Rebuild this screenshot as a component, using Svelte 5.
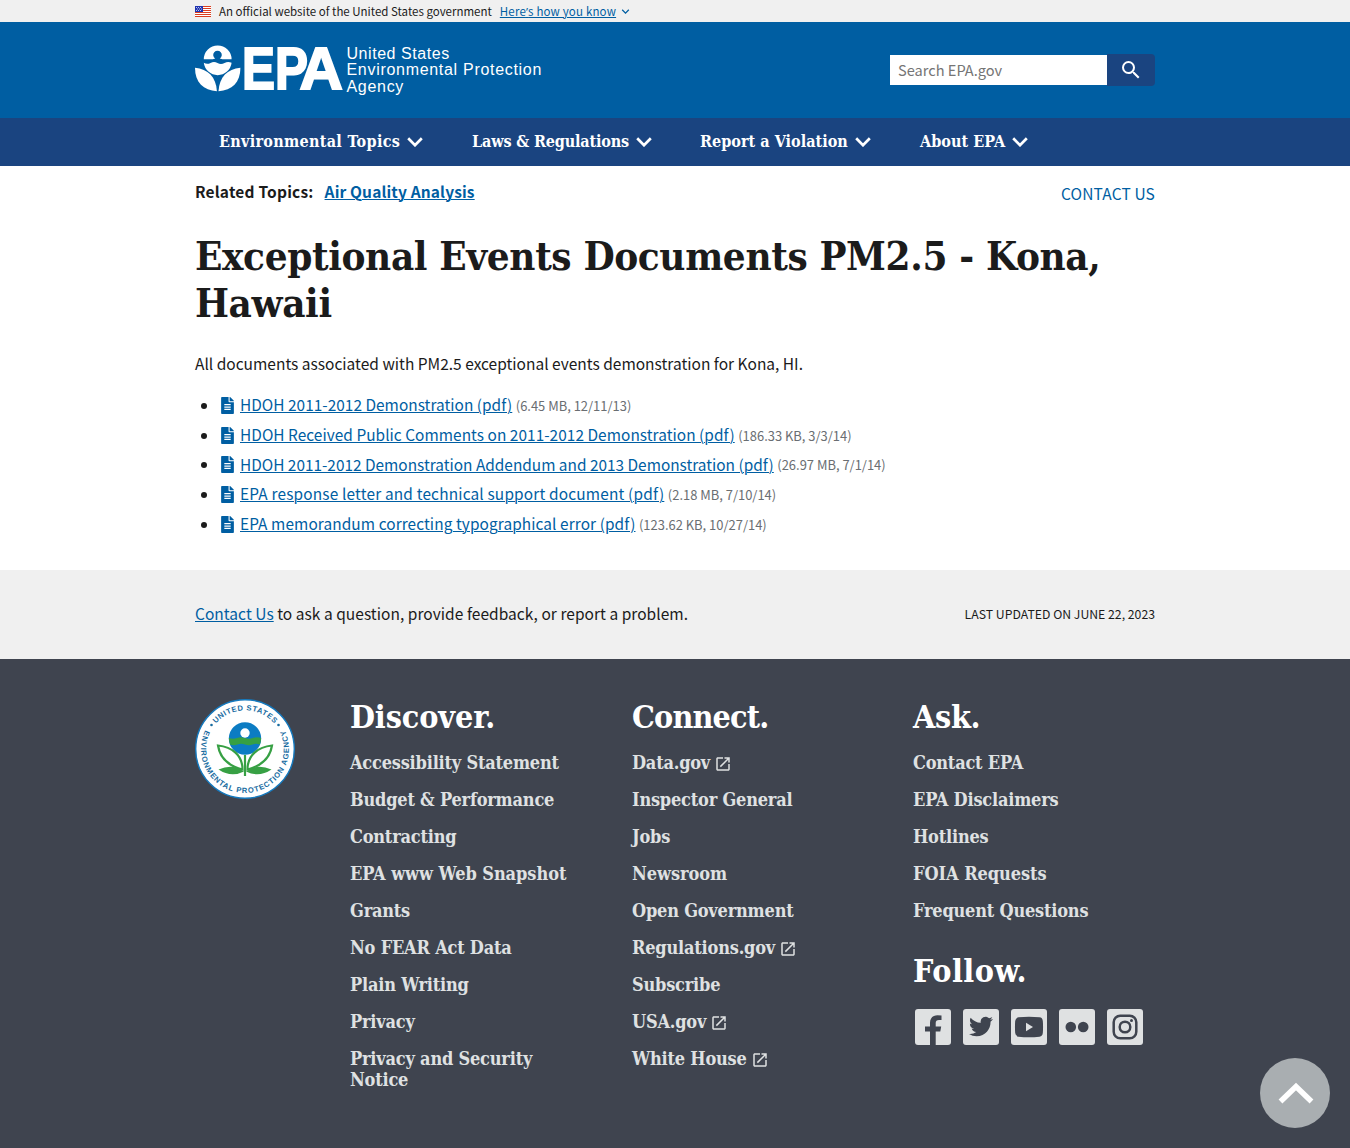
<script>
  const nav = [
    { label: 'Environmental Topics', cls: 'n1' },
    { label: 'Laws & Regulations', cls: 'n2' },
    { label: 'Report a Violation', cls: 'n3' },
    { label: 'About EPA', cls: 'n4' }
  ];
  const docs = [
    ['HDOH 2011-2012 Demonstration (pdf)', '(6.45 MB, 12/11/13)'],
    ['HDOH Received Public Comments on 2011-2012 Demonstration (pdf)', '(186.33 KB, 3/3/14)'],
    ['HDOH 2011-2012 Demonstration Addendum and 2013 Demonstration (pdf)', '(26.97 MB, 7/1/14)'],
    ['EPA response letter and technical support document (pdf)', '(2.18 MB, 7/10/14)'],
    ['EPA memorandum correcting typographical error (pdf)', '(123.62 KB, 10/27/14)']
  ];
  const discover = ['Accessibility Statement', 'Budget & Performance', 'Contracting', 'EPA www Web Snapshot', 'Grants', 'No FEAR Act Data', 'Plain Writing', 'Privacy', 'Privacy and Security Notice'];
  const connect = ['Data.gov', 'Inspector General', 'Jobs', 'Newsroom', 'Open Government', 'Regulations.gov', 'Subscribe', 'USA.gov', 'White House'];
  const external = ['Data.gov', 'Regulations.gov', 'USA.gov', 'White House'];
  const ask = ['Contact EPA', 'EPA Disclaimers', 'Hotlines', 'FOIA Requests', 'Frequent Questions'];
  const stripes = [0, 2, 4, 6, 8, 10];
</script>

{#snippet links(items)}
  <ul class="links">
    {#each items as item}
      <li>
        <a href="#top">{item}</a>{#if external.includes(item)}<svg class="launch" viewBox="0 0 24 24"><path d="M19 19H5V5h7V3H5c-1.11 0-2 .9-2 2v14c0 1.1.89 2 2 2h14c1.1 0 2-.9 2-2v-7h-2v7zM14 3v2h3.59l-9.83 9.83 1.41 1.41L19 6.41V10h2V3h-7z" /></svg>{/if}
      </li>
    {/each}
  </ul>
{/snippet}

<div class="page" id="top">
  <div class="banner">
    <div class="wrap banner-row">
      <svg class="flag" viewBox="0 0 16 11">
        <rect width="16" height="11" fill="#fff" />
        {#each stripes as y}<rect {y} width="16" height="1" fill="#db3e1f" />{/each}
        <rect width="8" height="6" fill="#1e33b1" />
        <path d="M1 1.5h6M2 3h5M1 4.5h6" stroke="#fff" stroke-width=".7" stroke-dasharray="1 1" />
      </svg>
      <span class="official">An official website of the United States government</span>
      <a class="know" href="#top">Here<span class="apos">’</span>s how you know</a>
      <svg class="tiny" viewBox="0 0 24 24"><path d="M16.59 8.59 12 13.17 7.41 8.59 6 10l6 6 6-6z" /></svg>
    </div>
  </div>

  <header>
    <div class="wrap head-row">
      <a class="logo" href="#top" aria-label="EPA home">
        <svg class="mark" viewBox="0 0 152 48">
          <path d="M8.800 14.300A13.900 13.900 0 0 1 36.600 14.300H27.400L24.800 13.600A4.300 4.300 0 1 0 20.200 13.600L17.800 14.300Z" />
          <path d="M8.800 17.800Q12 19.800 15.500 18T22.500 18T29.500 18T36.600 17.800A14 14 0 0 1 8.800 17.800Z" />
          <path d="M0 22.800C13 24 21 32 21.900 46.200C8.500 45.500 0 37.500 0 22.800Z" />
          <path d="M45.400 22.800C32.400 24 24.400 32 23.500 46.200C37 45.500 45.400 37.500 45.400 22.800Z" />
          <text y="44"><tspan x="47" textLength="66" lengthAdjust="spacingAndGlyphs">EP</tspan><tspan x="104.500">A</tspan></text>
        </svg>
        <span class="agency">
          <span class="a1">United States</span>
          <span class="a2">Environmental Protection</span>
          <span class="a3">Agency</span>
        </span>
      </a>
      <form class="search">
        <input type="text" placeholder="Search EPA.gov" />
        <button type="button" aria-label="Search">
          <svg viewBox="0 0 24 24"><path d="M15.500 14h-.79l-.28-.27A6.471 6.471 0 0 0 16 9.500 6.500 6.500 0 1 0 9.500 16c1.610 0 3.090-.59 4.230-1.570l.27.28v.79l5 4.990L20.490 19l-4.990-5zm-6 0C7.010 14 5 11.990 5 9.500S7.010 5 9.500 5 14 7.010 14 9.500 11.990 14 9.500 14z" /></svg>
        </button>
      </form>
    </div>
  </header>

  <nav>
    <div class="wrap nav-row">
      {#each nav as n}
        <a href="#top" class={n.cls}><span>{n.label}</span><svg viewBox="0 0 16 10"><path d="M1.200 1.300 8 8.200l6.800-6.900" /></svg></a>
      {/each}
    </div>
  </nav>

  <main class="wrap">
    <div class="topics">
      <div class="related"><span>Related Topics:</span><a href="#top">Air Quality Analysis</a></div>
      <a class="contact" href="#top">CONTACT US</a>
    </div>
    <h1>Exceptional Events Documents PM2.5 - Kona, Hawaii</h1>
    <p>All documents associated with PM2.5 exceptional events demonstration for Kona, HI.</p>
    <ul class="docs">
      {#each docs as [name, meta]}
        <li>
          <i></i>
          <svg viewBox="0 0 12 16"><path d="M7 0H.75A.75.75 0 0 0 0 .75v14.500c0 .41.34.75.75.75h10.500c.41 0 .75-.34.75-.75V5H7.750A.75.75 0 0 1 7 4.250zM9 12.200H3v-1.100h6zm0-2.200H3V8.900h6zm0-2.200H3V6.700h6zM12 3.800V4H8V0h.2c.2 0 .4.080.53.220l3.050 3.050c.14.14.22.330.22.530z" /></svg>
          <a href="#top">{name}</a><span class="meta">{meta}</span>
        </li>
      {/each}
    </ul>
  </main>

  <div class="feedback">
    <div class="wrap feedback-row">
      <span class="ask-line"><a href="#top">Contact Us</a> to ask a question, provide feedback, or report a problem.</span>
      <span class="updated">LAST UPDATED ON JUNE 22, 2023</span>
    </div>
  </div>

  <footer>
    <div class="wrap foot-grid">
      <svg class="seal" viewBox="0 0 100 102">
        <defs>
          <path id="arc-top" d="M11.300 51A38.700 38.700 0 0 1 88.700 51" />
          <path id="arc-bottom" d="M21.700 17.300A44 44 0 1 0 78.300 17.300" />
        </defs>
        <circle cx="50" cy="51" r="49.300" fill="#fff" stroke="#1479be" stroke-width="1.400" />
        <text class="seal-text"><textPath href="#arc-top" startOffset="50%" text-anchor="middle" textLength="66">UNITED STATES</textPath></text>
        <text class="seal-text"><textPath href="#arc-bottom" startOffset="50%" text-anchor="middle" textLength="177">ENVIRONMENTAL PROTECTION AGENCY</textPath></text>
        <circle cx="16.500" cy="27" r="1.300" fill="#176b9f" />
        <circle cx="83.500" cy="27" r="1.300" fill="#176b9f" />
        <circle cx="50" cy="40.500" r="16.200" fill="#0c7cc3" />
        <path d="M33.900 40Q38 41.500 42 40T50 40T58 40T66.100 40Q66 43.500 64.900 46.500Q61 45 57.500 46.500T50 46.500T42.500 46.500T35.100 46.500Q34 43.500 33.900 40Z" fill="#36a044" />
        <circle cx="50" cy="35" r="4.700" fill="#fff" />
        <path d="M23 47.500C37 49 47.500 57 47.500 71.500C34 68 25 61 23 47.500ZM77 47.500C63 49 52.500 57 52.500 71.500C66 68 75 61 77 47.500Z" fill="none" stroke="#37a044" stroke-width="2.200" />
        <path d="M50 57V78" stroke="#37a044" stroke-width="2.200" />
        <path d="M23.500 71.500Q38 65 49 73.500Q36 80 23.500 71.500ZM76.500 71.500Q62 65 51 73.500Q64 80 76.500 71.500Z" fill="#37a044" />
      </svg>
      <section>
        <h2 class="discover">Discover.</h2>
        {@render links(discover)}
      </section>
      <section>
        <h2 class="connect">Connect.</h2>
        {@render links(connect)}
      </section>
      <section>
        <h2>Ask.</h2>
        {@render links(ask)}
        <h2 class="follow">Follow.</h2>
        <div class="social">
          <svg viewBox="0 0 36 36"><rect width="36" height="36" rx="3" /><path class="ink" d="M15 36V22.500H10V17.500H15V14C15 9 18 6.200 22.500 6.200Q24.500 6.200 26.500 6.600V11H24C21.700 11 20.700 12.300 20.700 14V17.500H26.200L25.300 22.500H20.700V36Z" /></svg>
          <svg viewBox="0 0 36 36"><rect width="36" height="36" rx="3" /><path class="ink" transform="translate(6 5.500)" d="M23.953 4.570a10 10 0 01-2.825.775 4.958 4.958 0 002.163-2.723c-.951.555-2.005.959-3.127 1.184a4.920 4.920 0 00-8.384 4.482C7.690 8.095 4.067 6.130 1.640 3.162a4.822 4.822 0 00-.666 2.475c0 1.710.87 3.213 2.188 4.096a4.904 4.904 0 01-2.228-.616v.06a4.923 4.923 0 003.946 4.827 4.996 4.996 0 01-2.212.085 4.936 4.936 0 004.604 3.417 9.867 9.867 0 01-6.102 2.105c-.39 0-.779-.023-1.170-.067a13.995 13.995 0 007.557 2.209c9.053 0 13.998-7.496 13.998-13.985 0-.21 0-.42-.015-.63A9.935 9.935 0 0024 4.590z" /></svg>
          <svg viewBox="0 0 36 36"><rect width="36" height="36" rx="3" /><path class="ink" d="M7.500 8.300Q18 7.300 28.500 8.300Q31.500 8.600 31.800 12Q32.300 18 31.800 24Q31.500 27.400 28.500 27.700Q18 28.700 7.500 27.700Q4.500 27.400 4.200 24Q3.700 18 4.200 12Q4.500 8.600 7.500 8.300Z" /><path d="M15 13.800 22 18 15 22.200Z" /></svg>
          <svg viewBox="0 0 36 36"><rect width="36" height="36" rx="3" /><circle class="ink" cx="11.800" cy="18" r="5.300" /><circle class="ink" cx="24.200" cy="18" r="5.300" /></svg>
          <svg viewBox="0 0 36 36"><rect width="36" height="36" rx="3" /><g class="line"><rect x="6.700" y="6.700" width="22.600" height="22.600" rx="6.500" /><circle cx="18" cy="18" r="5.300" /></g><circle class="ink" cx="24.500" cy="11.500" r="1.500" /></svg>
        </div>
      </section>
    </div>
  </footer>

  <a class="to-top" href="#top" aria-label="Back to top"><svg viewBox="0 0 36 24"><path d="M2.500 20.500 18 5.500 33.500 20.500" /></svg></a>
</div>

<style>
  :global(body) { background: #fff; color: #1b1b1b; font-family: "Noto Sans CJK SC", sans-serif; font-size: 15.500px; }
  a { color: #005ea2; text-decoration: underline; text-underline-offset: 1px; text-decoration-thickness: 1px; }
  ul { list-style: none; margin: 0; padding: 0; }
  .page { height: 1148px; overflow: hidden; display: flex; flex-direction: column; }
  .wrap { width: 960px; margin: 0 auto; box-sizing: border-box; }

  .banner { background: #f0f0f0; height: 22px; flex: none; }
  .banner-row { display: flex; align-items: center; height: 22px; font-size: 11.500px; line-height: 22px; }
  .flag { width: 16px; height: 11px; margin-right: 8px; }
  .official { margin-right: 8px; white-space: nowrap; }
  .know { letter-spacing: .17px; white-space: nowrap; }
  .apos { font-family: "Open Sans", sans-serif; }
  .tiny { width: 15px; height: 15px; margin-left: 2px; fill: #005ea2; }

  header { background: #005ea2; height: 96px; flex: none; }
  .head-row { display: flex; justify-content: space-between; height: 96px; align-items: center; }
  .logo { display: flex; color: #fff; text-decoration: none; }
  .mark { width: 152px; height: 48px; margin-top: .25px; fill: #fff; overflow: visible; }
  .mark text { font: bold 60px "Liberation Sans", sans-serif; stroke: #fff; stroke-width: 2; }
  .agency { display: flex; flex-direction: column; margin-left: -.5px; padding-top: 1px; font: 16px/16.500px "Liberation Sans", sans-serif; letter-spacing: .7px; white-space: nowrap; }
  .a1 { letter-spacing: .55px; }
  .search { display: flex; height: 32px; width: 265px; }
  input { box-sizing: border-box; width: 217px; height: 32px; border: 1px solid #005ea2; border-width: 1px 0; margin: 0; padding: 0 8px 2px; border-radius: 0; font: 14.600px "Noto Sans CJK SC", sans-serif; background: #fff; outline: 0; }
  input::placeholder { color: #757575; opacity: 1; }
  button { width: 48px; height: 32px; border: 0; border-radius: 0 4px 4px 0; padding: 0; background: #1a4480; display: grid; place-items: center; }
  button svg { width: 24px; height: 24px; fill: #fff; }

  nav { background: #1a4480; height: 48px; flex: none; }
  .nav-row { display: flex; padding-left: 24px; height: 48px; }
  nav a { display: flex; align-items: center; color: #fff; text-decoration: none; font: bold 16px/48px "DejaVu Serif Condensed", "DejaVu Serif", serif; white-space: nowrap; }
  nav a svg { width: 16px; height: 10px; margin-left: 7px; fill: none; stroke: #fff; stroke-width: 2.700; }
  .n1 { width: 253px; letter-spacing: .3px; }
  .n2 { width: 228px; letter-spacing: -.15px; }
  .n3 { width: 220px; letter-spacing: .03px; }
  .n4 { letter-spacing: .05px; }

  main { height: 404px; flex: none; }
  .topics { display: flex; justify-content: space-between; padding-top: 13px; height: 53px; box-sizing: content-box; line-height: 24px; }
  .related { font-weight: bold; display: flex; gap: 11px; letter-spacing: .2px; }
  .related a { letter-spacing: .14px; }
  .contact { text-decoration: none; line-height: 28px; letter-spacing: .15px; }
  h1 { margin: 0; font: bold 40px/47px "DejaVu Serif Condensed", "DejaVu Serif", serif; letter-spacing: -.38px; }
  p { margin: 24px 0 0; line-height: 26px; }
  .docs { margin-top: 14.500px; font-size: 15.400px; }
  .docs li { display: flex; align-items: center; height: 29.700px; white-space: nowrap; line-height: 28px; }
  .docs i { width: 6px; height: 6px; border-radius: 50%; background: #1b1b1b; margin: 1px 14px 0 6px; }
  .docs svg { width: 13px; height: 17px; fill: #005ea2; margin-right: 6px; }
  .docs a { padding-bottom: 2px; letter-spacing: .03px; }
  .docs li:nth-child(2) a { letter-spacing: .05px; }
  .docs li:nth-child(3) a { letter-spacing: 0; }
  .docs li:nth-child(4) a { letter-spacing: .175px; }
  .docs li:nth-child(5) a { letter-spacing: .09px; }
  .meta { font-size: 12.950px; color: #6a6e72; margin-left: 3.500px; padding-top: 1px; }

  .feedback { background: #f0f0f0; height: 89px; flex: none; }
  .feedback-row { display: flex; justify-content: space-between; align-items: center; height: 86px; line-height: 26px; }
  .ask-line { letter-spacing: .035px; }
  .updated { font-size: 12.250px; padding-top: 2px; }

  footer { background: #3f444f; flex: 1; }
  .foot-grid { display: grid; grid-template-columns: 155px 282px 281px 242px; padding-top: 39px; }
  .seal { width: 100px; height: 102px; }
  .seal-text { font: bold 7.600px "Liberation Sans", sans-serif; fill: #176b9f; }
  h2 { margin: 0; color: #fff; font: bold 32px/38px "DejaVu Serif Condensed", "DejaVu Serif", serif; letter-spacing: -.3px; }
  .discover { letter-spacing: -.1px; }
  .connect { letter-spacing: -.85px; }
  .links { margin-top: 16px; }
  .links li { font: bold 18px/21px "DejaVu Serif Condensed", "DejaVu Serif", serif; letter-spacing: -.2px; margin-bottom: 16px; width: 225px; }
  .links li:nth-child(4) { letter-spacing: -.05px; }
  .links a { color: #dfe1e2; text-decoration: none; }
  .launch { width: 18px; height: 18px; fill: #dfe1e2; vertical-align: -2px; margin: -2px 0 -2px 4px; }
  .follow { margin-top: 31px; letter-spacing: .5px; }
  .social { display: flex; gap: 12px; margin: 18.500px 0 0 2px; }
  .social svg { width: 36px; height: 36px; fill: #dfe1e2; }
  .social .ink { fill: #3f444f; }
  .social .line { fill: none; stroke: #3f444f; stroke-width: 2.500; }

  .to-top { position: fixed; right: 20px; bottom: 20px; width: 70px; height: 70px; border-radius: 50%; background: #a9aeb1; display: grid; place-items: center; }
  .to-top svg { width: 36px; height: 24px; margin-left: 2px; fill: none; stroke: #fff; stroke-width: 5.500; }
</style>
